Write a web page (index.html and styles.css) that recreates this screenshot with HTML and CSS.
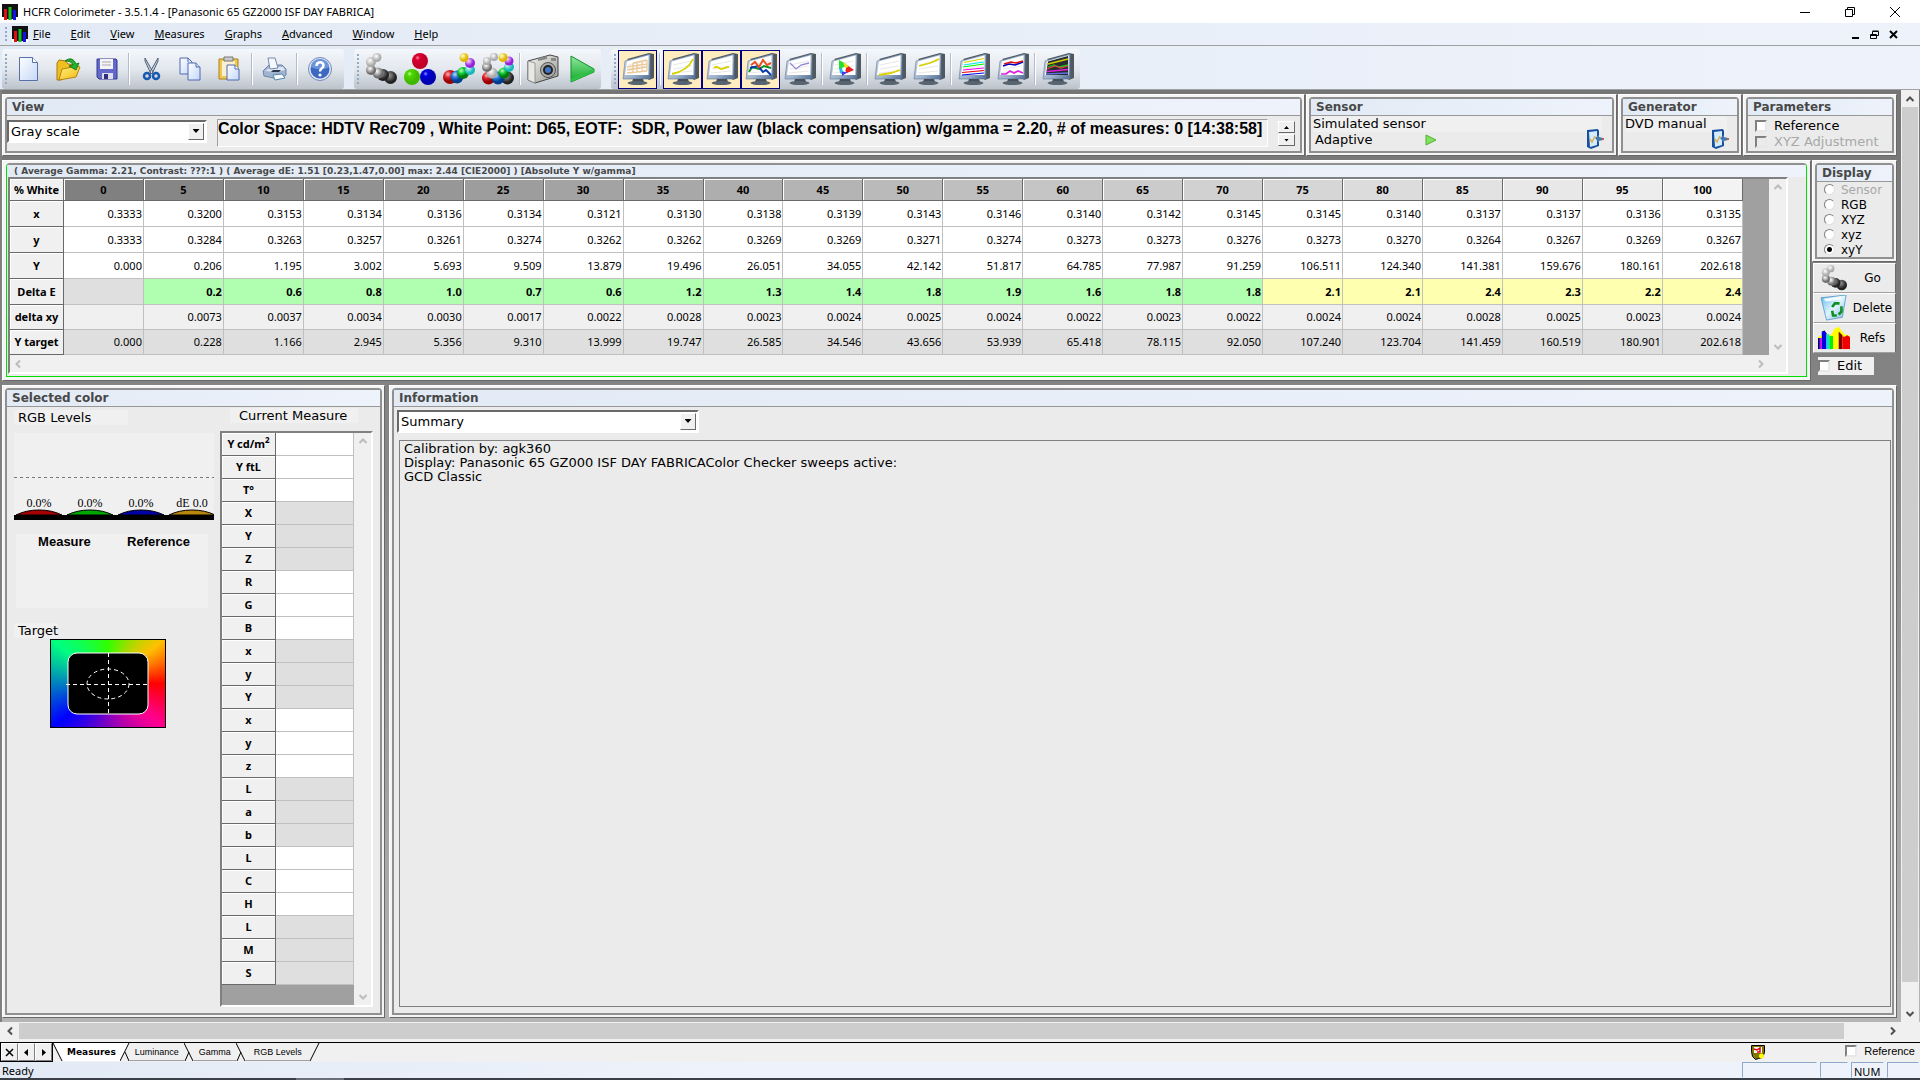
FILE: index.html
```html
<!DOCTYPE html>
<html lang="en">
<head>
<meta charset="utf-8">
<title>HCFR Colorimeter - 3.5.1.4 - [Panasonic 65 GZ2000 ISF DAY FABRICA]</title>
<link rel="stylesheet" href="styles.css">
</head>
<body>
<svg class="defs" width="0" height="0" aria-hidden="true">
  <defs>
    <radialGradient id="gWhite" cx=".4" cy=".35"><stop offset="0" stop-color="#fff"/><stop offset="1" stop-color="#aaa"/></radialGradient>
    <radialGradient id="gSilver" cx=".4" cy=".35"><stop offset="0" stop-color="#fff"/><stop offset="1" stop-color="#6c6c6c"/></radialGradient>
    <radialGradient id="gDark" cx=".4" cy=".35"><stop offset="0" stop-color="#999"/><stop offset="1" stop-color="#222"/></radialGradient>
    <radialGradient id="gRed" cx=".35" cy=".3"><stop offset="0" stop-color="#ffb0b0"/><stop offset=".5" stop-color="#d8202a"/><stop offset="1" stop-color="#900"/></radialGradient>
    <radialGradient id="gBlue" cx=".35" cy=".3"><stop offset="0" stop-color="#b8dcff"/><stop offset=".5" stop-color="#2a78d8"/><stop offset="1" stop-color="#003c90"/></radialGradient>
    <radialGradient id="gGreen" cx=".35" cy=".3"><stop offset="0" stop-color="#c0ffc0"/><stop offset=".5" stop-color="#18d038"/><stop offset="1" stop-color="#007a10"/></radialGradient>
    <radialGradient id="gCyan" cx=".35" cy=".3"><stop offset="0" stop-color="#dff"/><stop offset="1" stop-color="#18b8b8"/></radialGradient>
    <radialGradient id="gViolet" cx=".35" cy=".3"><stop offset="0" stop-color="#f4d8ff"/><stop offset="1" stop-color="#9820d8"/></radialGradient>
    <radialGradient id="gYellow" cx=".35" cy=".3"><stop offset="0" stop-color="#ffc"/><stop offset="1" stop-color="#e0b800"/></radialGradient>
    <radialGradient id="gCrimson" cx=".35" cy=".3"><stop offset="0" stop-color="#ff8aa0"/><stop offset=".3" stop-color="#dc0030"/><stop offset="1" stop-color="#c00028"/></radialGradient>
    <radialGradient id="gLime" cx=".35" cy=".3"><stop offset="0" stop-color="#b8ff90"/><stop offset=".3" stop-color="#50d800"/><stop offset="1" stop-color="#40b800"/></radialGradient>
    <radialGradient id="gNavy" cx=".35" cy=".3"><stop offset="0" stop-color="#9090ff"/><stop offset=".3" stop-color="#0000e0"/><stop offset="1" stop-color="#0000b0"/></radialGradient>
    <linearGradient id="gPaper" x2="1" y2="1"><stop offset="0" stop-color="#fdfeff"/><stop offset="1" stop-color="#c4d8f8"/></linearGradient>
    <linearGradient id="gFolder" x2="1" y2="1"><stop offset="0" stop-color="#fff080"/><stop offset="1" stop-color="#f4b810"/></linearGradient>
    <linearGradient id="gPlay" y2="1" x2="0"><stop offset="0" stop-color="#90e8a0"/><stop offset="1" stop-color="#10a828"/></linearGradient>
    <linearGradient id="gFrame" x2="1" y2="1"><stop offset="0" stop-color="#d4dce4"/><stop offset=".6" stop-color="#a0b4cc"/><stop offset="1" stop-color="#506c94"/></linearGradient>
    <linearGradient id="gMetal" x2="1" y2="1"><stop offset="0" stop-color="#f4f4f0"/><stop offset="1" stop-color="#989894"/></linearGradient>
    <linearGradient id="gBin" y2="1" x2="1"><stop offset="0" stop-color="#58b8f0"/><stop offset=".5" stop-color="#e0f4ff"/><stop offset="1" stop-color="#80b8e0"/></linearGradient>

    <symbol id="i-app" viewBox="0 0 16 16"><path fill="#111" d="M0 0h16v16H0z"/><path fill="#e01010" d="M2 5h3v11H2z"/><path fill="#10c020" d="M6.500 3h3v13h-3z"/><path fill="#1010f0" d="M11 6h3v10h-3z"/><path fill="#fff" d="M0 13h2v3H0zM5 15h1.500v1H5zM9.500 15H11v1H9.500zM14 13h2v3h-2z"/></symbol>
    <symbol id="i-new" viewBox="0 0 32 32"><path fill="url(#gPaper)" stroke="#5870a8" d="M6.500 4.500h13l5 5v18h-18z"/><path fill="#fff" stroke="#5870a8" d="M19.500 4.500v5h5"/></symbol>
    <symbol id="i-open" viewBox="0 0 32 32"><path fill="#f0c020" stroke="#a87810" d="M5 10l2-3 7 1 2 3 8 1v5L9 27H5z"/><path fill="url(#gFolder)" stroke="#b88008" d="M10 16l16-3 2 1-4 10-17 3z"/><path fill="#28b030" stroke="#087010" stroke-width=".800" d="M13 8c5-4 9-2 11 3l3-1-3 7-7-4 4-1c-1-3-4-4-8-4z"/></symbol>
    <symbol id="i-save" viewBox="0 0 32 32"><path fill="#6468c8" stroke="#343890" d="M6 6h19l1 1v19H8l-2-2z"/><path fill="#f4f4f8" d="M9 6h13v10H9z"/><path stroke="#aaa" d="M11 9h9M11 12h9"/><path fill="#dde" d="M11 20h11v6H11z"/><path fill="#2c3080" d="M13 21h4v5h-4z"/></symbol>
    <symbol id="i-cut" viewBox="0 0 32 32"><path fill="#c8d0dc" stroke="#506078" d="M9 5l8 14-2 2L9 8zM22 5l-8 14 2 2 6-13z"/><circle cx="11" cy="23" r="3" fill="none" stroke="#1858b0" stroke-width="2.500"/><circle cx="20" cy="23" r="3" fill="none" stroke="#1858b0" stroke-width="2.500"/></symbol>
    <symbol id="i-copy" viewBox="0 0 32 32"><g fill="url(#gPaper)" stroke="#5068b0"><path d="M5 5h8l4 4v12H5z"/><path d="M13 10h8l4 4v13H13z"/><path d="M21 10v4h4M13 5v4"/></g></symbol>
    <symbol id="i-paste" viewBox="0 0 32 32"><path fill="#f0c850" stroke="#a88020" d="M5 6h19v20H5z"/><path fill="#f8f0d0" d="M8 8h13v15H8z"/><path fill="#c8ccd0" stroke="#777" d="M10 4h9v4h-9z"/><path fill="url(#gPaper)" stroke="#5068b0" d="M13 12h8l4 4v11H13z"/><path fill="#fff" stroke="#5068b0" d="M21 12v4h4"/></symbol>
    <symbol id="i-print" viewBox="0 0 32 32"><path fill="#a0b4d0" stroke="#6c84ac" d="M4 18l6-6h13l4 4v6l-7 4-15-3z"/><path fill="#dde8f4" d="M6 18l6-4h12l2 3-8 2z"/><path fill="#f4f8ff" stroke="#7888a8" d="M9 5h7l3 10-8 1z"/><path fill="#28384c" d="M14 17h8l-2 2h-8z"/><path fill="#f8fcff" stroke="#58a" d="M14 22l9-1 3 4-10 2z"/></symbol>
    <symbol id="i-help" viewBox="0 0 32 32"><circle cx="16" cy="16" r="11.500" fill="#dfe8f8" stroke="#7088b8"/><circle cx="16" cy="16" r="9.500" fill="#3c68c0"/><path fill="#6c94dc" d="M7 14a9 8 0 0 1 18 0c-4 3-12 3-18 0z"/><path fill="none" stroke="#fff" stroke-width="2.500" d="M12.500 13c0-5 7-5 7-.500 0 3-3.500 2.500-3.500 6"/><circle cx="16" cy="22" r="1.600" fill="#fff"/></symbol>

    <symbol id="i-grays" viewBox="0 0 32 32"><circle cx="25.500" cy="24.500" r="6.500" fill="url(#gDark)"/><circle cx="18" cy="22" r="6" fill="url(#gDark)"/><circle cx="13" cy="20" r="5.500" fill="url(#gSilver)"/><circle cx="6" cy="17" r="5" fill="url(#gSilver)"/><circle cx="6" cy="9" r="5" fill="url(#gWhite)"/><circle cx="12" cy="4.500" r="4.500" fill="url(#gWhite)"/></symbol>
    <symbol id="i-prims" viewBox="0 0 32 32"><circle cx="16" cy="8" r="8" fill="url(#gCrimson)"/><circle cx="8" cy="24" r="8" fill="url(#gLime)"/><circle cx="24" cy="24" r="8" fill="url(#gNavy)"/></symbol>
    <symbol id="i-secs" viewBox="0 0 32 32"><circle cx="7" cy="24" r="7" fill="url(#gRed)"/><circle cx="14" cy="24" r="6.500" fill="url(#gBlue)"/><circle cx="20" cy="20" r="6" fill="url(#gGreen)"/><circle cx="27" cy="17" r="5" fill="url(#gCyan)"/><circle cx="27" cy="10" r="5" fill="url(#gViolet)"/><circle cx="21" cy="4.500" r="4.500" fill="url(#gYellow)"/></symbol>
    <symbol id="i-all" viewBox="0 0 32 32"><circle cx="25.500" cy="25" r="6.500" fill="url(#gDark)"/><circle cx="6.500" cy="25" r="6.500" fill="url(#gRed)"/><circle cx="16" cy="25" r="6.500" fill="url(#gBlue)"/><circle cx="10" cy="20" r="5.500" fill="url(#gWhite)"/><circle cx="22" cy="20" r="5.500" fill="url(#gGreen)"/><circle cx="5" cy="14" r="5" fill="url(#gSilver)"/><circle cx="27" cy="14" r="5" fill="url(#gCyan)"/><circle cx="5" cy="8" r="4" fill="url(#gWhite)"/><circle cx="27" cy="8" r="4.500" fill="url(#gViolet)"/><circle cx="12" cy="4" r="4" fill="url(#gWhite)"/><circle cx="21" cy="4.500" r="4.500" fill="url(#gYellow)"/></symbol>
    <symbol id="i-camera" viewBox="0 0 32 32"><path fill="url(#gMetal)" stroke="#444" d="M1 8L23 2l8 2v19L8 30l-7-3z"/><path fill="#e8e8e4" stroke="#888" stroke-width=".800" d="M1 8l7 2v20l-7-3z"/><path fill="#888" d="M11 5l9-2v3l-9 2zM24 5h5v3h-5z"/><circle cx="21" cy="17" r="7.500" fill="#aaa" stroke="#555"/><circle cx="21" cy="17" r="5" fill="#222"/><circle cx="21" cy="17" r="3" fill="#4078c8"/></symbol>
    <symbol id="i-play" viewBox="0 0 32 32"><path fill="url(#gPlay)" stroke="#109028" d="M5 3l23 13v3L5 29z"/><path fill="#30c048" d="M5 26l23-10v3L5 29z"/></symbol>

    <symbol id="i-mon" viewBox="0 0 32 32"><path fill="#505860" d="M5 6L27 0l5 1v24l-5 2z"/><path fill="url(#gFrame)" stroke="#607898" stroke-width=".600" d="M3 8L28 1v25H1z"/><path fill="#fff" d="M5 8.500L26.500 2.500v19.500H3z"/><path stroke="#e8e8e8" d="M6 12l19-4M6 16l19-3M5 20l20-2"/><path fill="#46505c" d="M11 26h10l1 3H10z"/><ellipse cx="15.500" cy="30" rx="10" ry="2" fill="#586470"/></symbol>

    <symbol id="i-device" viewBox="0 0 18 20"><path fill="#1850a0" d="M1 1l11-1 1 2v15L5 20l-4-2z"/><path fill="#d4ecfc" d="M3 3l8-1v14l-7 2z"/><path fill="none" stroke="#e0b050" stroke-width="1.500" d="M4 10l2 3 3-6"/><path fill="#4878b0" d="M9 9l4-3v2l4 1v2l-4 1v2z"/><path fill="#c06040" d="M16 9h2v2h-2z"/></symbol>
    <symbol id="i-bin" viewBox="0 0 32 28"><path fill="url(#gBin)" stroke="#4890c0" stroke-width=".800" d="M2 3l27-3-4 24-17 3z"/><path fill="#f0faff" d="M5 4l20-3-2 4-16 2z"/><g fill="none" stroke="#109020" stroke-width="2.800"><path d="M14 13l3-4h5"/><path d="M24 12v6l-3 3"/><path d="M19 22h-4l-1-5"/></g></symbol>
    <symbol id="i-refs" viewBox="0 0 34 24"><path fill="#ff0" d="M0 11l4-2 2-6 3 4 4 2 2-2 3-5 4-2 2 3 4 5 6 2v3H0z"/><path fill="#000080" d="M0 12h2v12H0z"/><path fill="#e000e0" d="M2 12h2v12H2z"/><path fill="#0000e0" d="M4 5l3-1 2 3v17H4z"/><path fill="#00e0f0" d="M9 8h3v16H9z"/><path fill="#00f000" d="M12 10h4v14h-4z"/><path fill="#ff0" d="M16 4h6v20h-6z"/><path fill="#800000" d="M22 5l4 4v15h-4z"/><path fill="#f00000" d="M26 10l2 1 3-2 3 2v13h-8z"/></symbol>
    <symbol id="i-up" viewBox="0 0 16 16"><path fill="none" stroke="currentColor" stroke-width="2" d="M4.500 10L8 6.500l3.500 3.500"/></symbol>
    <symbol id="i-down" viewBox="0 0 16 16"><path fill="none" stroke="currentColor" stroke-width="2" d="M4.500 6L8 9.500 11.500 6"/></symbol>
    <symbol id="i-left" viewBox="0 0 16 16"><path fill="none" stroke="currentColor" stroke-width="2" d="M10 4.500L6.500 8l3.500 3.500"/></symbol>
    <symbol id="i-right" viewBox="0 0 16 16"><path fill="none" stroke="currentColor" stroke-width="2" d="M6 4.500L9.500 8 6 11.500"/></symbol>
  </defs>
</svg>

<header class="titlebar">
  <svg class="app"><use href="#i-app"/></svg>
  <span class="title">HCFR Colorimeter - 3.5.1.4 - [Panasonic 65 GZ2000 ISF DAY FABRICA]</span>
  <div class="wincontrols">
    <button aria-label="Minimize"><svg width="12" height="12"><path stroke="#000" d="M1 6.500h10"/></svg></button>
    <button aria-label="Restore"><svg width="12" height="12"><path fill="none" stroke="#000" d="M1.500 3.500h7v7h-7zM3.500 3V1.500h7v7H9"/></svg></button>
    <button aria-label="Close"><svg width="12" height="12"><path stroke="#000" d="M1 1l10 10M11 1L1 11"/></svg></button>
  </div>
</header>

<nav class="menubar">
  <i class="grip"></i>
  <svg class="app"><use href="#i-app"/></svg>
  <div class="menus">
    <button><u>F</u>ile</button><button><u>E</u>dit</button><button><u>V</u>iew</button><button><u>M</u>easures</button><button><u>G</u>raphs</button><button><u>A</u>dvanced</button><button><u>W</u>indow</button><button><u>H</u>elp</button>
  </div>
  <div class="mdi">
    <button aria-label="Minimize document"><svg width="9" height="9"><path fill="#000" d="M1 7h7v2H1z"/></svg></button>
    <button aria-label="Restore document"><svg width="9" height="9"><path fill="none" stroke="#000" d="M.500 4.500h6v4h-6zM.500 5.500h6M2.500 4V1.500h6v4H7M2.500 1h6"/></svg></button>
    <button aria-label="Close document"><svg width="9" height="9"><path stroke="#000" stroke-width="2" d="M1 1l7 7M8 1L1 8"/></svg></button>
  </div>
</nav>

<div class="toolbars">
  <div class="toolbar standard">
    <i class="grip"></i>
    <button aria-label="New"><svg><use href="#i-new"/></svg></button>
    <button aria-label="Open"><svg><use href="#i-open"/></svg></button>
    <button aria-label="Save"><svg><use href="#i-save"/></svg></button>
    <i class="sep"></i>
    <button aria-label="Cut"><svg><use href="#i-cut"/></svg></button>
    <button aria-label="Copy"><svg><use href="#i-copy"/></svg></button>
    <button aria-label="Paste"><svg><use href="#i-paste"/></svg></button>
    <i class="sep"></i>
    <button aria-label="Print"><svg><use href="#i-print"/></svg></button>
    <i class="sep"></i>
    <button aria-label="Help"><svg><use href="#i-help"/></svg></button>
  </div>
  <div class="toolbar capture">
    <i class="grip"></i>
    <button aria-label="Measure grays"><svg><use href="#i-grays"/></svg></button>
    <button aria-label="Measure primaries"><svg><use href="#i-prims"/></svg></button>
    <button aria-label="Measure secondaries"><svg><use href="#i-secs"/></svg></button>
    <button aria-label="Measure all"><svg><use href="#i-all"/></svg></button>
    <i class="sep"></i>
    <button aria-label="Capture"><svg><use href="#i-camera"/></svg></button>
    <button aria-label="Run"><svg><use href="#i-play"/></svg></button>
  </div>
  <div class="toolbar">
    <i class="grip"></i>
    <button class="on" aria-label="Measures view"><svg viewBox="0 0 32 32"><use href="#i-mon"/><path fill="none" stroke="#ecc898" stroke-width="1.300" d="M11 10l14-3M5 14l20-3M5 17l20-3M5 20l20-2M11 10v10M15 9v10M20 8v11M25 7v11"/></svg></button>
    <i class="sep"></i>
    <button class="on" aria-label="Luminance"><svg viewBox="0 0 32 32"><use href="#i-mon"/><path fill="none" stroke="#d8d000" stroke-width="1.800" d="M5 21c10-2 17-6 21-15"/></svg></button>
    <button class="on" aria-label="Gamma"><svg viewBox="0 0 32 32"><use href="#i-mon"/><path fill="none" stroke="#d8d000" stroke-width="1.800" d="M8 15c3-4 5 2 8 1s4-2 7-2"/></svg></button>
    <button class="on" aria-label="RGB levels"><svg viewBox="0 0 32 32"><use href="#i-mon"/><g fill="none" stroke-width="2"><path stroke="#109020" d="M4 19l3-5 7 2 5-3 7 2"/><path stroke="#0838b0" d="M5 15l8-2 5 6 3-2 5 5"/><path stroke="#e85020" d="M6 12l4-3 4 5 4-7 4 5 4-2"/></g></svg></button>
    <button aria-label="Color temperature"><svg viewBox="0 0 32 32"><use href="#i-mon"/><path fill="none" stroke="#9088d8" stroke-width="1.300" d="M6 10l6 6 5-4 8-2"/></svg></button>
    <i class="sep"></i>
    <button aria-label="CIE diagram"><svg viewBox="0 0 32 32"><use href="#i-mon"/><path fill="#20e030" d="M10 7l7 4-3 6-4-1z"/><path fill="#28b8e8" d="M10 15l5 1-1 6-3-2z"/><path fill="#e82020" d="M18 12l7 5-7 3-3-4z"/><path fill="#e8e020" d="M14 9l6 4-4 3z"/><path fill="#5030e8" d="M13 19l6 0-6 4z"/><circle cx="15" cy="16" r="2" fill="#fff"/></svg></button>
    <i class="sep"></i>
    <button aria-label="Near black"><svg viewBox="0 0 32 32"><use href="#i-mon"/><path fill="none" stroke="#d8d000" stroke-width="1.800" d="M5 22l12-2 9-3"/></svg></button>
    <button aria-label="Near white"><svg viewBox="0 0 32 32"><use href="#i-mon"/><path fill="none" stroke="#d8d000" stroke-width="1.800" d="M6 13l11-3 9-4"/></svg></button>
    <i class="sep"></i>
    <button aria-label="Saturation luminance"><svg viewBox="0 0 32 32"><use href="#i-mon"/><g stroke-width="1.200"><path stroke="#d0d000" d="M6 9.500l20-4"/><path stroke="#0ee" d="M6 12l20-3"/><path stroke="#0e0" d="M5 14l21-3"/><path stroke="#e0e" d="M5 17l21-2"/><path stroke="#e00" d="M4 19.500l22-2"/><path stroke="#00e" d="M4 22l22-2"/></g></svg></button>
    <button aria-label="Saturation shifts"><svg viewBox="0 0 32 32"><use href="#i-mon"/><g fill="none" stroke-width="1.600"><path stroke="#00c" d="M6 13l6-2 6 1 8-3"/><path stroke="#e01010" d="M7 11l7-2 5 1 7-2"/><path stroke="#e020e0" d="M4 21h5l4-3 4 2 4-2 5 2"/></g></svg></button>
    <i class="sep"></i>
    <button aria-label="Free measures"><svg viewBox="0 0 32 32"><use href="#i-mon"/><path fill="#282c30" d="M6 8.500L26 3v19H4z"/><g fill="none" stroke-width="1.300"><path stroke="#d0d000" d="M6 11l20-5"/><path stroke="#20c020" d="M6 14l6-2 5 2 9-2"/><path stroke="#e04040" d="M5 16l8-3 6 2 7-2"/><path stroke="#e020e0" d="M5 18.500l21-2"/><path stroke="#6070e0" d="M4 21l22-1"/></g></svg></button>
  </div>
</div>

<main class="work">
  <div class="content">
    <div class="row">
      <section class="panel grow"><div class="frame"><h2>View</h2>
        <div class="viewbody">
          <span class="combo view"><select aria-label="Data set"><option>Gray scale</option></select><i class="drop"></i></span>
          <div class="infobox">Color Space: HDTV Rec709 , White Point: D65, EOTF:  SDR, Power law (black compensation) w/gamma = 2.20, # of measures: 0 [14:38:58]</div>
          <div class="spin"><button aria-label="Up"><i class="tri up"></i></button><button aria-label="Down"><i class="tri"></i></button></div>
        </div></div></section>
      <section class="panel sensor"><div class="frame"><h2>Sensor</h2>
        <div class="lines"><p>Simulated sensor</p><p class="adaptive"><span>Adaptive</span><svg width="12" height="12"><path fill="#80e060" stroke="#50b030" d="M1 1l10 5-10 5z"/></svg></p></div>
        <button class="device" aria-label="Configure sensor"><svg width="18" height="20"><use href="#i-device"/></svg></button></div></section>
      <section class="panel generator"><div class="frame"><h2>Generator</h2>
        <div class="lines"><p>DVD manual</p></div>
        <button class="device" aria-label="Configure generator"><svg width="18" height="20"><use href="#i-device"/></svg></button></div></section>
      <section class="panel params"><div class="frame"><h2>Parameters</h2>
        <label class="check"><input type="checkbox">Reference</label>
        <label class="check off"><input type="checkbox" disabled>XYZ Adjustment</label></div></section>
    </div>

    <div class="row">
      <section class="panel grow data"><div class="frame"><h2 class="small">( Average Gamma: 2.21, Contrast: ???:1 ) ( Average dE: 1.51 [0.23,1.47,0.00] max: 2.44 [CIE2000] ) [Absolute Y w/gamma]</h2>
        <div class="grid">
          <div class="gridmain"><table class="measures" id="measures"></table><div class="vbar faint"><svg><use href="#i-up"/></svg><svg><use href="#i-down"/></svg></div></div>
          <div class="hbar faint"><svg><use href="#i-left"/></svg><svg><use href="#i-right"/></svg></div>
        </div></div></section>
      <div class="side">
        <section class="panel"><div class="frame"><h2>Display</h2>
          <div class="radios">
            <label class="off"><input type="radio" name="display" disabled>Sensor</label>
            <label><input type="radio" name="display">RGB</label>
            <label><input type="radio" name="display">XYZ</label>
            <label><input type="radio" name="display">xyz</label>
            <label><input type="radio" name="display" checked>xyY</label>
          </div></div></section>
        <div class="actions">
          <button><svg viewBox="0 0 32 32"><use href="#i-grays"/></svg><span>Go</span></button>
          <button><svg viewBox="0 0 32 28"><use href="#i-bin"/></svg><span>Delete</span></button>
          <button><svg viewBox="0 0 34 24"><use href="#i-refs"/></svg><span>Refs</span></button>
        </div>
        <label class="check edit"><input type="checkbox">Edit</label>
      </div>
    </div>

    <div class="row fill">
      <section class="panel selected"><div class="frame"><h2>Selected color</h2>
        <div class="selbody">
          <div class="left">
            <p class="tag levels">RGB Levels</p>
            <svg class="chart" viewBox="0 0 200 87">
              <path stroke="#777" stroke-dasharray="3 3" d="M0 44.500h200"/>
              <g stroke="#000"><path fill="#a80000" d="M2 82q10-5 23-5t23 5z"/><path fill="#00a800" d="M53 82q10-5 23-5t23 5z"/><path fill="#0000a8" d="M104 82q10-5 23-5t23 5z"/><path fill="#b8860b" d="M155 82q10-5 23-5t23 5z"/></g>
              <path d="M0 82h200v5H0z"/>
              <g class="pct"><text x="25" y="74">0.0%</text><text x="76" y="74">0.0%</text><text x="127" y="74">0.0%</text><text x="178" y="74">dE 0.0</text></g>
            </svg>
            <div class="compare"><b>Measure</b><b>Reference</b></div>
            <p class="tag target">Target</p>
            <div class="wheel"><svg width="114" height="87" viewBox="0 0 114 87"><rect x="17" y="13" width="80" height="61" rx="9" stroke="#fff"/><g fill="none" stroke="#fff" stroke-dasharray="4 3"><path d="M15 44.500h84M57.500 13v62"/><ellipse cx="57" cy="44" rx="21" ry="15"/></g></svg></div>
          </div>
          <div class="current">
            <p class="tag">Current Measure</p>
            <div class="grid tall"><div class="gridmain"><table id="current"></table><div class="vbar faint"><svg><use href="#i-up"/></svg><svg><use href="#i-down"/></svg></div></div></div>
          </div>
        </div></div></section>
      <section class="panel grow"><div class="frame"><h2>Information</h2>
        <div class="infobody">
          <span class="combo"><select aria-label="Information page"><option>Summary</option></select><i class="drop"></i></span>
          <textarea aria-label="Summary" spellcheck="false">Calibration by: agk360
Display: Panasonic 65 GZ000 ISF DAY FABRICAColor Checker sweeps active:
GCD Classic</textarea>
        </div></div></section>
    </div>
  </div>
  <div class="vbar page"><svg><use href="#i-up"/></svg><i class="thumb"></i><svg><use href="#i-down"/></svg></div>
</main>
<div class="hbar page"><svg><use href="#i-left"/></svg><i class="thumb"></i><svg><use href="#i-right"/></svg></div>

<div class="tabs">
  <div class="tabnav">
    <button aria-label="Close tab"><svg width="9" height="9"><path stroke="#000" stroke-width="1.500" d="M1 1l7 7M8 1L1 8"/></svg></button><button aria-label="Previous tab"><svg width="9" height="9"><path d="M6 1v7L2 4.500z"/></svg></button><button aria-label="Next tab"><svg width="9" height="9"><path d="M3 1v7l4-3.500z"/></svg></button>
  </div>
  <svg class="edge" viewBox="0 0 10 18"><path fill="#fff" d="M0 0h10v18z"/><path stroke="#000" d="M0 0l9 18"/></svg>
  <button class="tab active">Measures</button>
  <svg class="edge" viewBox="0 0 10 18"><path fill="#fff" d="M0 0h10L0 18z"/><path fill="none" stroke="#000" d="M0 18L9 0M5 9l4 9"/></svg>
  <button class="tab">Luminance</button>
  <svg class="edge" viewBox="0 0 10 18"><path fill="none" stroke="#000" d="M0 0l9 18M1 18l4-9"/></svg>
  <button class="tab">Gamma</button>
  <svg class="edge" viewBox="0 0 10 18"><path fill="none" stroke="#000" d="M0 0l9 18M1 18l4-9"/></svg>
  <button class="tab wide">RGB Levels</button>
  <svg class="edge" viewBox="0 0 10 18"><path stroke="#000" d="M0 18L9 0"/></svg>
  <span class="space"></span>
  <svg class="palette" width="14" height="15" viewBox="0 0 14 15"><path fill="#807800" stroke="#000" d="M.500.500h13v7l-2 5-4 1-3 1-3-3-1-5z"/><path fill="#fff" d="M3 2h8v6H3z"/><path fill="none" stroke="#e00000" stroke-width="1.500" d="M3 4l3 1 3-2v4H6"/><circle cx="10.500" cy="11" r="2.500" fill="#ff0"/></svg>
  <label class="check tabref"><input type="checkbox">Reference</label>
</div>
<footer class="status"><span class="ready">Ready</span><span class="pane p1"></span><span class="pane p2"></span><span class="pane p3">NUM</span><span class="pane p4"></span></footer>
<div class="taskbar"><i></i></div>
<script src="script.js"></script>
</body>
</html>
```
FILE: script.js
```js
const levels = Array.from({ length: 21 }, (_, i) => i * 5);
const rows = [
  ["x", "plain", "0.3333 0.3200 0.3153 0.3134 0.3136 0.3134 0.3121 0.3130 0.3138 0.3139 0.3143 0.3146 0.3140 0.3142 0.3145 0.3145 0.3140 0.3137 0.3137 0.3136 0.3135"],
  ["y", "plain", "0.3333 0.3284 0.3263 0.3257 0.3261 0.3274 0.3262 0.3262 0.3269 0.3269 0.3271 0.3274 0.3273 0.3273 0.3276 0.3273 0.3270 0.3264 0.3267 0.3269 0.3267"],
  ["Y", "plain", "0.000 0.206 1.195 3.002 5.693 9.509 13.879 19.496 26.051 34.055 42.142 51.817 64.785 77.987 91.259 106.511 124.340 141.381 159.676 180.161 202.618"],
  ["Delta E", "delta", "- 0.2 0.6 0.8 1.0 0.7 0.6 1.2 1.3 1.4 1.8 1.9 1.6 1.8 1.8 2.1 2.1 2.4 2.3 2.2 2.4"],
  ["delta xy", "soft", "- 0.0073 0.0037 0.0034 0.0030 0.0017 0.0022 0.0028 0.0023 0.0024 0.0025 0.0024 0.0022 0.0023 0.0022 0.0024 0.0024 0.0028 0.0025 0.0023 0.0024"],
  ["Y target", "gray", "0.000 0.228 1.166 2.945 5.356 9.310 13.999 19.747 26.585 34.546 43.656 53.939 65.418 78.115 92.050 107.240 123.704 141.459 160.519 180.901 202.618"]
];
const shade = p => { const v = Math.round(128 + p * 1.15); return `rgb(${v},${v},${v})`; };
let html = "<tr><th scope='col'>% White</th>" +
  levels.map(p => `<th scope="col" style="background:${shade(p)}">${p}</th>`).join("") + "</tr>";
for (const [name, kind, values] of rows) {
  html += `<tr class="${kind}"><th scope="row">${name}</th>` + values.split(" ").map(v => {
    const cls = kind === "delta" && v !== "-" ? (parseFloat(v) < 2 ? "good" : "fair") : "";
    return `<td class="${cls}">${v === "-" ? "" : v}</td>`;
  }).join("") + "</tr>";
}
document.getElementById("measures").innerHTML = html;

const groups = [["Y cd/m<sup>2</sup>", "Y ftL", "T°"], ["X", "Y", "Z"], ["R", "G", "B"], ["x", "y", "Y"],
  ["x", "y", "z"], ["L", "a", "b"], ["L", "C", "H"], ["L", "M", "S"]];
document.getElementById("current").innerHTML = groups.map((g, i) => g.map(n =>
  `<tr class="${i % 2 ? "gray" : "plain"}"><th scope="row">${n}</th><td></td></tr>`).join("")).join("");
```
FILE: styles.css
```css
* { box-sizing: border-box; }
html, body { height: 100%; }
body { margin: 0; display: flex; flex-direction: column; min-width: 1200px; overflow: hidden; background: #f0f0f0; color: #000; font: 13px/16px "DejaVu Sans", sans-serif; }
h2, p { margin: 0; font-weight: normal; }
button { padding: 0; border: 0; background: none; color: inherit; font: inherit; }
svg { display: block; flex: none; }
.defs { position: absolute; }
i { display: block; flex: none; }

.titlebar { display: flex; align-items: center; height: 23px; padding: 0 19px 0 2px; background: #fff; font: 11px/16px "Noto Sans", sans-serif; }
.app { width: 16px; height: 16px; }
.title { flex: 1; padding-left: 5px; }
.wincontrols { display: flex; gap: 33px; }

.menubar { display: flex; align-items: center; height: 23px; padding: 0 22px 0 5px; border-bottom: 1px solid #a0a0a0; background: linear-gradient(90deg, #e2eaf5, #eef3fb); font: 11px/16px "Noto Sans", sans-serif; }
.grip { width: 2px; height: 14px; background: repeating-linear-gradient(#8fa9c9 0 2px, transparent 2px 4px); }
.menubar .app { margin-left: 5px; }
.menus { display: flex; flex: 1; gap: 20px; padding-left: 5px; }
.mdi { display: flex; gap: 10px; }

.toolbars { display: flex; gap: 10px; height: 44px; padding: 3px 0 0 2px; border-bottom: 1px solid #a0a0a0; background: linear-gradient(90deg, #e2eaf5, #eef3fb); }
.toolbar { display: flex; align-items: center; height: 40px; padding-right: 3px; border-radius: 3px; background: linear-gradient(#f4f7fb, #e3e8ee 50%, #bcc3cb); }
.toolbar.standard { padding-right: 5px; }
.toolbar.capture { padding-right: 0; }
.toolbar .grip { height: 30px; margin: 0 2px 0 3px; }
.toolbar button { display: grid; place-items: center; width: 39px; height: 39px; }
.toolbar svg { width: 32px; height: 32px; }
.toolbar .on { border: 1px solid #000080; background: #ffedc0; }
.sep { width: 2px; height: 32px; margin: 0 2px; border-left: 1px solid #b4bcc8; border-right: 1px solid #fff; }

.work { display: flex; flex: 1; min-height: 0; border-left: 2px solid #808080; background: linear-gradient(#757575, #878787 40%, #b5b5b5); }
.content { display: flex; flex: 1; flex-direction: column; gap: 4px; min-width: 0; padding: 4px 4px 4px 0; }
.row { display: flex; gap: 1px; }
.fill { flex: 1; gap: 4px; min-height: 0; }
.grow { flex: 1; min-width: 0; }
.panel { display: flex; padding: 2px; border: 1px solid; border-color: #fff #696969 #696969 #fff; background: #f4f4f4; }
.frame { display: flex; flex: 1; flex-direction: column; min-width: 0; position: relative; border: 2px solid #909090; border-radius: 4px 4px 0 0; background: #ebebeb; }
.panel h2 { height: 17px; padding-left: 5px; border-bottom: 1px solid #979797; background: linear-gradient(90deg, #e2eaf5, #eef3fb); color: #484848; font-size: 12px; font-weight: bold; line-height: 17px; }
.panel h2.small { height: 12px; padding-left: 7px; border: 0; font-size: 9px; line-height: 12px; white-space: nowrap; }

.viewbody { display: flex; gap: 10px; height: 35px; padding: 3px 5px 4px 0; }
.combo { display: block; position: relative; width: 302px; height: 23px; }
.combo.view { width: 200px; margin-top: 1px; }
.combo select { width: 100%; height: 100%; padding: 0 2px; border: 2px solid; border-color: #696969 #fff #fff #696969; border-radius: 0; background: #fff; color: #000; font: inherit; appearance: none; }
.drop { position: absolute; top: 3px; right: 3px; width: 16px; height: 17px; border: 1px solid; border-color: #fff #696969 #696969 #fff; background: #f0f0f0; pointer-events: none; }
.drop::after, .tri { content: ""; display: block; width: 7px; height: 4px; margin: 5px auto; background: #000; clip-path: polygon(0 0, 100% 0, 50% 100%); }
.infobox { flex: 1; overflow: hidden; height: 28px; border: 1px solid; border-color: #a0a0a0 #fff #fff #a0a0a0; background: #f0f0f0; font: bold 16px/18px "Liberation Sans", sans-serif; white-space: pre; }
.spin { display: flex; flex-direction: column; gap: 1px; width: 17px; padding-top: 2px; }
.spin button { height: 12px; border: 1px solid; border-color: #fff #696969 #696969 #fff; background: #f0f0f0; }
.spin .tri { width: 5px; height: 3px; margin: 0 auto; }
.tri.up { transform: rotate(180deg); }

.sensor { width: 311px; }
.generator { width: 124px; }
.params { width: 154px; }
.lines { padding: 0 10px 0 2px; }
.lines p { height: 16px; line-height: 16px; background: #f0f0f0; white-space: nowrap; }
.lines .adaptive { display: flex; align-items: center; justify-content: space-between; width: 124px; padding-left: 2px; background: none; }
.device { position: absolute; right: 8px; bottom: 2px; }
.check { display: flex; align-items: center; gap: 7px; height: 16px; white-space: nowrap; font-size: 13px; }
.params .check { padding-left: 7px; }
.params h2 + .check { margin-top: 2px; }
.check input { width: 12px; height: 12px; margin: 0; border: 2px solid; border-color: #808080 #e8e8e8 #e8e8e8 #808080; background: #fff; appearance: none; flex: none; }
.off, .off input { color: #a8a8a8; background: none; }

.data.panel { padding: 2px 3px 3px; }
.data .frame { border: 1px solid #00e000; border-top: 2px solid #909090; }
.grid { display: flex; flex-direction: column; margin: 0 18px 2px 1px; border: 2px solid; border-color: #808080 #fff #fff #808080; background: #f0f0f0; }
.gridmain { display: flex; justify-content: space-between; background: #a0a0a0; }
table { border-collapse: separate; border-spacing: 0; table-layout: fixed; font: 11px/14px "Noto Sans", sans-serif; }
th, td { height: 26px; padding: 0; border-right: 1px solid #c0c0c0; border-bottom: 1px solid #c0c0c0; }
td { padding-right: 1px; text-align: right; }
th { border-color: #696969; background: #f0f0f0; box-shadow: inset 1px 1px #fff; font-weight: bold; text-align: center; white-space: nowrap; }
.measures { width: calc(100% - 43px); }
.measures tr:first-child th { height: 22px; }
.measures tr:nth-child(n+6) > * { height: 25px; }
.measures th:first-child { width: 54px; }
.plain td { background: #fff; }
.gray td, .delta td { background: #dfdfdf; }
.soft td { background: #f0f0f0; }
.delta td { font-weight: bold; }
.delta .good { background: #b0ffb0; }
.delta .fair { background: #ffffb0; }
.vbar { display: flex; flex-direction: column; justify-content: space-between; align-items: center; width: 17px; background: #f0f0f0; }
.hbar { display: flex; justify-content: space-between; align-items: center; height: 17px; background: #f0f0f0; color: #505050; }
.vbar svg, .hbar svg { width: 16px; height: 16px; }
.faint { color: #bcbcbc; }
.data .hbar { padding-right: 17px; }

.side { display: flex; flex-direction: column; width: 85px; }
.radios { display: flex; flex-direction: column; padding-left: 7px; }
.radios label { display: flex; align-items: center; gap: 6px; height: 15px; font-size: 12px; }
.radios input { width: 11px; height: 11px; margin: 0; border: 1px solid; border-color: #808080 #e0e0e0 #e0e0e0 #808080; border-radius: 50%; background: #fff; appearance: none; }
.radios input:checked { background: radial-gradient(#000 0 2px, #fff 3px); }
.actions { display: flex; flex-direction: column; margin-top: 1px; padding-left: 1px; }
.actions button { display: flex; align-items: center; width: 83px; height: 30px; padding-left: 4px; border: 1px solid; border-color: #fff #696969 #a0a0a0 #fff; background: #ebebeb; font-size: 12px; }
.actions svg { width: 32px; height: 26px; }
.actions span { flex: 1; text-align: center; }
.edit { width: 56px; height: 18px; margin: 4px 0 0 6px; background: #f0f0f0; }

.selected { width: 383px; }
.selbody { display: flex; flex: 1; min-height: 0; justify-content: space-between; padding: 1px 7px 6px 7px; }
.left { display: flex; flex-direction: column; width: 200px; }
.tag { align-self: flex-start; height: 15px; line-height: 15px; background: #f0f0f0; }
.levels { width: 114px; margin-top: 2px; padding-left: 4px; }
.chart { width: 200px; height: 87px; margin-top: 8px; background: #f0f0f0; }
.pct { font: 12px "Liberation Serif", serif; text-anchor: middle; }
.compare { display: flex; justify-content: space-around; width: 192px; height: 74px; margin: 14px 0 0 2px; padding-left: 4px; background: #f0f0f0; font: 13px/16px "Liberation Sans", sans-serif; }
.target { margin-top: 15px; padding-left: 4px; }
.wheel { width: 116px; height: 89px; margin: 1px 0 0 36px; border: 1px solid #000; background: conic-gradient(from 90deg, #f00, #ff0090 38deg, #8000c0 90deg, #0000ff 142deg, #0080c0 180deg, #00ff80 218deg, #30ff00 270deg, #ffc000 322deg, #f00); }
.current { display: flex; flex-direction: column; width: 153px; }
.current .tag { width: 128px; margin-left: 10px; padding-left: 9px; margin-bottom: 8px; white-space: nowrap; }
.tall { flex: 1; margin: 0; min-height: 0; }
.tall .gridmain { flex: 1; align-items: flex-start; }
.tall table { width: calc(100% - 17px); }
.tall th, .tall td { height: 23px; }
.tall th { width: 54px; }
.tall .vbar { align-self: stretch; }
sup { font-size: 8px; line-height: 0; vertical-align: 5px; }
.infobody { display: flex; flex: 1; flex-direction: column; gap: 7px; min-height: 0; padding: 3px 1px 6px 3px; }
textarea { display: block; flex: 1; margin: 0 0 0 2px; padding: 1px 4px; border: 1px solid #808080; background: #ebebeb; color: #000; font: inherit; line-height: 14px; resize: none; }

.page.vbar { width: 18px; padding: 1px 1px 0 0; margin-right: 1px; color: #505050; }
.vbar .thumb { flex: 1; width: 16px; margin-bottom: 24px; background: #cdcdcd; }
.page.hbar { height: 18px; padding: 0 19px 1px 2px; }
.hbar .thumb { flex: 1; height: 16px; margin: 0 41px 0 1px; background: #cdcdcd; }

.tabs { display: flex; height: 20px; margin-top: 2px; border-top: 1px solid #000; font: 9px/18px "Liberation Sans", sans-serif; }
.tabnav { display: flex; border: 1px solid #000; border-top: 0; height: 19px; }
.tabnav button { display: grid; place-items: center; width: 17px; border: 1px solid; border-color: #fff #808080 #808080 #fff; }
.edge { width: 10px; height: 18px; }
.tab { height: 18px; padding: 0 5px; border-bottom: 1px solid #a0a0a0; }
.tab.wide { padding: 0 8px; }
.active { padding: 0 4px; border-color: #fff; background: #fff; font: bold 9px/18px "DejaVu Sans", sans-serif; }
.space { flex: 1; }
.palette { margin: 2px 80px 0 0; }
.tabref { padding-right: 5px; font: 11px/16px "Liberation Sans", sans-serif; }
.status { display: flex; height: 16px; padding-right: 1px; background: linear-gradient(90deg, #e2eaf5, #eef3fb 40%); font: 11px/18px "Noto Sans", sans-serif; gap: 3px; }
.ready { flex: 1; padding-left: 2px; }
.pane { border: 1px solid; border-color: #8fa9c9 transparent transparent #8fa9c9; padding-left: 2px; }
.p1 { width: 75px; }
.p2 { width: 28px; }
.p3 { width: 33px; }
.p4 { width: 32px; }
.taskbar { height: 2px; background: #3b4048; }
.taskbar i { width: 48px; height: 2px; margin-left: 296px; background: #6b7078; }
```
